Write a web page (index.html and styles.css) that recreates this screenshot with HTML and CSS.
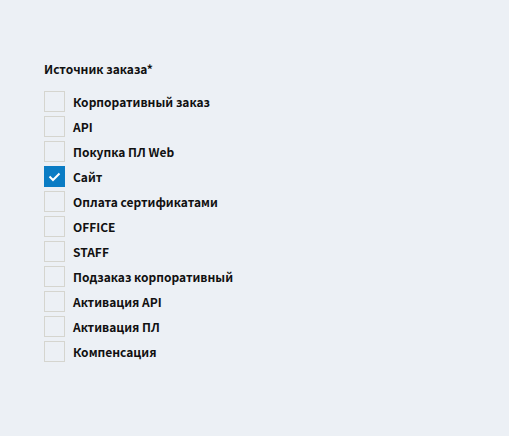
FILE: index.html
```html
<!DOCTYPE html>
<html lang="ru">
<head>
<meta charset="utf-8">
<title>Источник заказа</title>
<link rel="stylesheet" href="styles.css">
</head>
<body>
<form>
<fieldset class="group">
<legend class="title">Источник заказа*</legend>
<div class="options">
<label class="option"><input type="checkbox"><span>Корпоративный заказ</span></label>
<label class="option"><input type="checkbox"><span>API</span></label>
<label class="option"><input type="checkbox"><span>Покупка ПЛ Web</span></label>
<label class="option"><input type="checkbox" checked><span>Сайт</span><svg class="tick" viewBox="0 0 21 21" aria-hidden="true"><path d="M5.500 10.500l3.500 3.500L15.500 7.500"/></svg></label>
<label class="option"><input type="checkbox"><span>Оплата сертификатами</span></label>
<label class="option"><input type="checkbox"><span>OFFICE</span></label>
<label class="option"><input type="checkbox"><span>STAFF</span></label>
<label class="option"><input type="checkbox"><span>Подзаказ корпоративный</span></label>
<label class="option"><input type="checkbox"><span>Активация API</span></label>
<label class="option"><input type="checkbox"><span>Активация ПЛ</span></label>
<label class="option"><input type="checkbox"><span>Компенсация</span></label>
</div>
</fieldset>
</form>
</body>
</html>
```
FILE: styles.css
```css
body {
  margin: 0;
  padding: 60px 44px;
  background: #ecf0f5;
  color: #111;
  font: 700 12px/18px "Noto Sans CJK SC", "Noto Sans", sans-serif;
}

.group {
  margin: 0;
  padding: 0;
  border: 0;
}

.title {
  padding: 0;
  margin-bottom: 13px;
}

.options {
  display: grid;
  justify-items: start;
  gap: 4px;
}

.option {
  position: relative;
  display: flex;
  align-items: center;
  gap: 8px;
}

.option input {
  appearance: none;
  box-sizing: border-box;
  width: 21px;
  height: 21px;
  margin: 0;
  border: 1px solid #d5d5cf;
}

.option input:checked {
  border-color: #0a7cc4;
  background: #0a7cc4;
}

.tick {
  position: absolute;
  left: 0;
  top: 0;
  width: 21px;
  height: 21px;
  fill: none;
  stroke: #fff;
  stroke-width: 2;
}
```
